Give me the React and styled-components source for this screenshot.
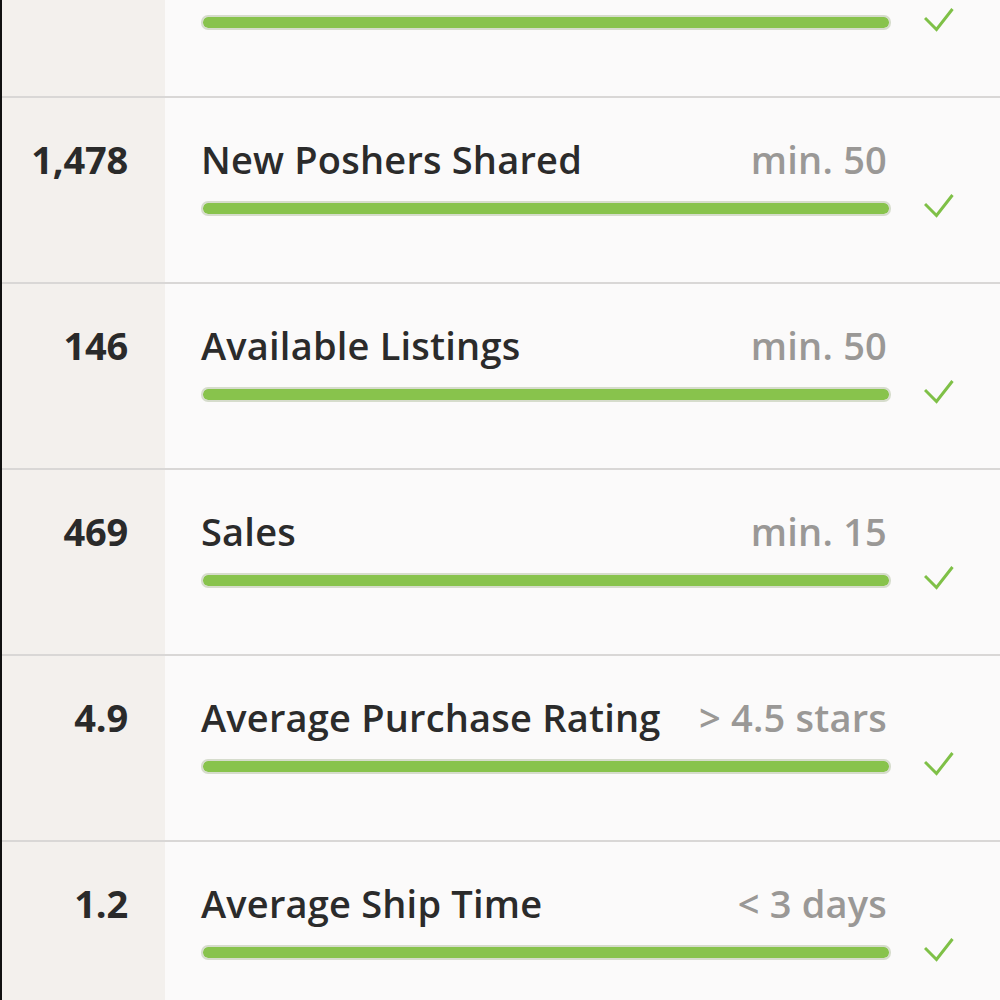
import React from 'react';
import styled, { createGlobalStyle } from 'styled-components';

const GlobalStyle = createGlobalStyle`
	html, body {
		margin: 0;
		padding: 0;
		background: #fbfafa;
		overflow: hidden;
	}
	body {
		font-family: "Open Sans", "Noto Sans", sans-serif;
		-webkit-font-smoothing: antialiased;
	}
`;

// first row is scrolled mostly out of view, only its bar shows
const metrics = [
	{ value: '', label: '', target: '' },
	{ value: '1,478', label: 'New Poshers Shared', target: 'min. 50' },
	{ value: '146', label: 'Available Listings', target: 'min. 50' },
	{ value: '469', label: 'Sales', target: 'min. 15' },
	{ value: '4.9', label: 'Average Purchase Rating', target: '> 4.5 stars' },
	{ value: '1.2', label: 'Average Ship Time', target: '< 3 days' },
];

const Check = () => (
	<svg width="30" height="25" viewBox="0 0 30 25" fill="none">
		<path
			d="M1 11 L12.5 22.5 L28.5 2"
			stroke="#7fc047"
			strokeWidth="3"
			strokeLinecap="butt"
			strokeLinejoin="miter"
		/>
	</svg>
);

export default function App() {
	return (
		<Page>
			<GlobalStyle />
			<List>
				{metrics.map((m, i) => (
					<Row key={i}>
						<Value>{m.value}</Value>
						<Content>
							<Header>
								<Label>{m.label}</Label>
								<Target>{m.target}</Target>
							</Header>
							<BarLine>
								<Bar>
									<Fill style={{ width: '100%' }} />
								</Bar>
								<CheckBox>
									<Check />
								</CheckBox>
							</BarLine>
						</Content>
					</Row>
				))}
			</List>
		</Page>
	);
}

const Page = styled.div`
	width: 1000px;
	height: 1000px;
	overflow: hidden;
	border-left: 2px solid #111;
	box-sizing: border-box;
	background: #fbfafa;
`;

const List = styled.div`
	margin-top: -88px;
	display: flex;
	flex-direction: column;
`;

const Row = styled.div`
	display: grid;
	grid-template-columns: 163px 1fr;
	height: 186px;
	box-sizing: border-box;
	border-bottom: 2px solid #d9d7d6;
`;

const Value = styled.div`
	background: #f3f0ed;
	padding: 42px 37px 0 0;
	text-align: right;
	font-size: 38px;
	line-height: 38px;
	font-weight: 700;
	color: #2a2a2a;
	letter-spacing: -0.2px;
`;

const Content = styled.div`
	padding: 42px 0 0 36px;
	display: flex;
	flex-direction: column;
`;

const Header = styled.div`
	width: 686px;
	height: 38px;
	display: flex;
	justify-content: space-between;
	align-items: baseline;
`;

const Label = styled.span`
	font-size: 38px;
	line-height: 38px;
	font-weight: 600;
	color: #2b2b2b;
	letter-spacing: 0.2px;
`;

const Target = styled.span`
	font-size: 38px;
	line-height: 38px;
	font-weight: 600;
	color: #9a9896;
	letter-spacing: 0.2px;
`;

const BarLine = styled.div`
	margin-top: 20px;
	display: flex;
	align-items: center;
	gap: 33px;
`;

const Bar = styled.div`
	width: 690px;
	height: 15px;
	box-sizing: border-box;
	border: 2px solid #d6dccc;
	border-radius: 7px;
	background: #e8e8e8;
	overflow: hidden;
`;

const Fill = styled.div`
	height: 100%;
	background: #88c34c;
	border-radius: 5px;
`;

const CheckBox = styled.div`
	display: flex;
	align-items: center;
	margin-top: -5px;
`;
